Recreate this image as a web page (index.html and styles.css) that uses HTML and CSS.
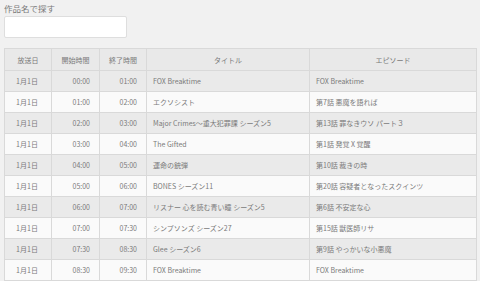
FILE: index.html
```html
<!DOCTYPE html>
<html lang="ja">
<head>
<meta charset="utf-8">
<link rel="stylesheet" href="styles.css">
</head>
<body>
<div class="search">
  <label class="search-label" for="q">作品名で探す</label>
  <input id="q" class="search-input" type="text">
</div>
<table class="schedule">
  <colgroup>
    <col class="c-date"><col class="c-start"><col class="c-end"><col class="c-title"><col class="c-ep">
  </colgroup>
  <thead>
    <tr><th>放送日</th><th>開始時間</th><th>終了時間</th><th>タイトル</th><th>エピソード</th></tr>
  </thead>
  <tbody>
    <tr><td class="date">1月1日</td><td class="time">00:00</td><td class="time">01:00</td><td>FOX Breaktime</td><td>FOX Breaktime</td></tr>
    <tr><td class="date">1月1日</td><td class="time">01:00</td><td class="time">02:00</td><td>エクソシスト</td><td>第7話 悪魔を語れば</td></tr>
    <tr><td class="date">1月1日</td><td class="time">02:00</td><td class="time">03:00</td><td>Major Crimes～重大犯罪課 シーズン5</td><td>第13話 罪なきウソ パート３</td></tr>
    <tr><td class="date">1月1日</td><td class="time">03:00</td><td class="time">04:00</td><td>The Gifted</td><td>第1話 発覚 X 覚醒</td></tr>
    <tr><td class="date">1月1日</td><td class="time">04:00</td><td class="time">05:00</td><td>運命の銃弾</td><td>第10話 裁きの時</td></tr>
    <tr><td class="date">1月1日</td><td class="time">05:00</td><td class="time">06:00</td><td>BONES シーズン11</td><td>第20話 容疑者となったスクインツ</td></tr>
    <tr><td class="date">1月1日</td><td class="time">06:00</td><td class="time">07:00</td><td>リスナー 心を読む青い瞳 シーズン5</td><td>第6話 不安定な心</td></tr>
    <tr><td class="date">1月1日</td><td class="time">07:00</td><td class="time">07:30</td><td>シンプソンズ シーズン27</td><td>第15話 獣医師リサ</td></tr>
    <tr><td class="date">1月1日</td><td class="time">07:30</td><td class="time">08:30</td><td>Glee シーズン6</td><td>第9話 やっかいな小悪魔</td></tr>
    <tr><td class="date">1月1日</td><td class="time">08:30</td><td class="time">09:30</td><td>FOX Breaktime</td><td>FOX Breaktime</td></tr>
  </tbody>
</table>
</body>
</html>
```
FILE: styles.css
```css
html, body {
  margin: 0;
  padding: 0;
  background: #f1f1f1;
}
body {
  padding: 2px 4px 0 4px;
  font-family: "Noto Sans CJK JP", "Open Sans", sans-serif;
  color: #7a7a7a;
}
.search {
  display: flex;
  flex-direction: column;
  align-items: flex-start;
}
.search-label {
  font-size: 8.5px;
  line-height: 12px;
  height: 12px;
}
.search-input {
  margin: 2px 0 0 0;
  box-sizing: border-box;
  width: 123px;
  height: 22px;
  border: 1px solid #dedede;
  border-radius: 2px;
  background: #fff;
  padding: 0 4px;
}
.schedule {
  margin-top: 10px;
  border-collapse: collapse;
  table-layout: fixed;
  width: 472px;
  font-size: 7px;
}
.c-date { width: 47px; }
.c-start { width: 48px; }
.c-end { width: 47px; }
.c-title { width: 163px; }
.c-ep { width: 167px; }
.schedule th,
.schedule td {
  border: 1px solid #d9d9d9;
  height: 21px;
  padding: 0 6px;
  line-height: 10px;
  white-space: nowrap;
  overflow: hidden;
  box-sizing: border-box;
}
.schedule th {
  background: #e9e9e9;
  font-weight: normal;
  text-align: center;
  height: 22px;
}
.schedule tbody tr:nth-child(odd) td { background: #eaeaea; }
.schedule tbody tr:nth-child(even) td { background: #fafafa; }
.schedule td.date { text-align: center; padding: 0 2px 0 0; }
.schedule td.time { text-align: right; padding-right: 9px; }
```
